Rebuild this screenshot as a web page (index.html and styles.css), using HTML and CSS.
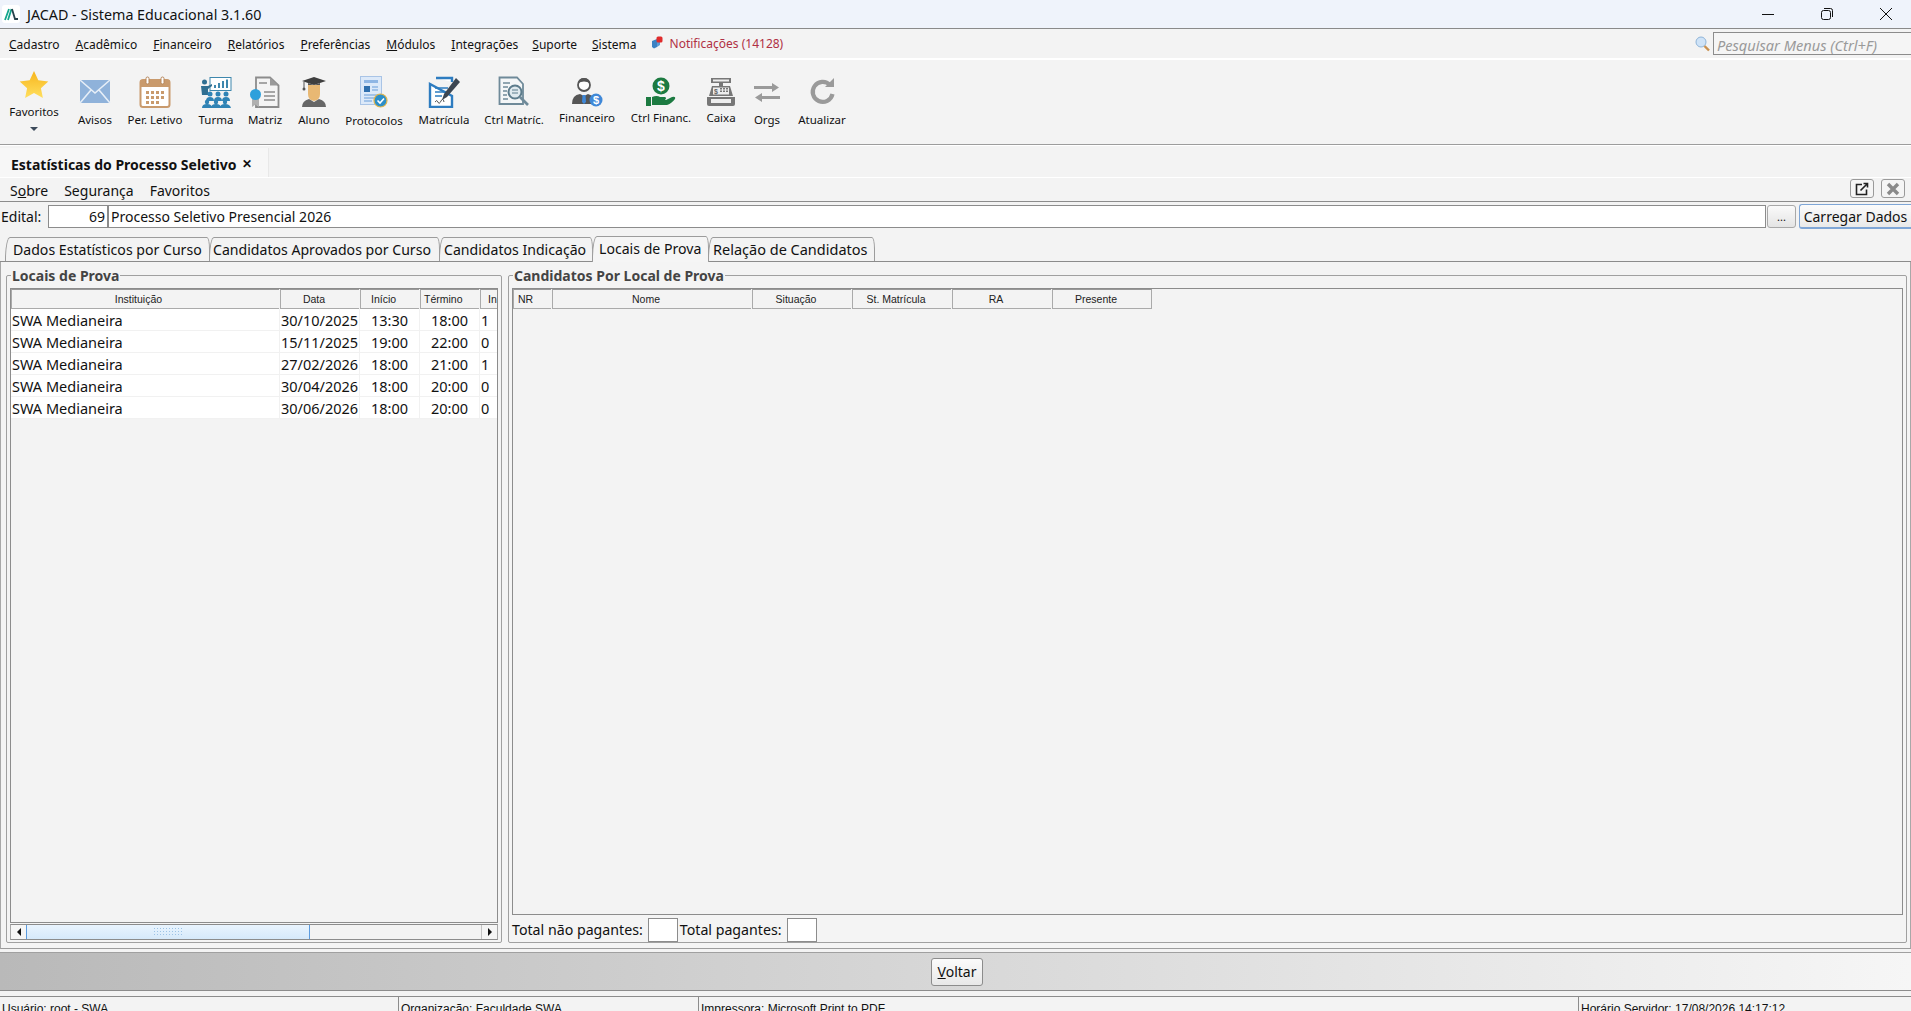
FILE: index.html
```html
<!DOCTYPE html>
<html lang="pt-BR">
<head>
  <meta charset="UTF-8" />
  <title>JACAD - Sistema Educacional 3.1.60</title>
  <link rel="stylesheet" href="styles.css">
</head>
<body>
  <!-- Barra de titulo -->
  <header class="title-bar">
    <svg class="app-logo" width="18" height="18" viewBox="0 0 18 18"><rect width="18" height="18" rx="3" fill="#fff"/><path d="M3 15L7 4M6 15L9.500 4" stroke="#14a58c" stroke-width="1.800" fill="none"/><path d="M10 4L13 14H16" stroke="#27424a" stroke-width="1.800" fill="none"/></svg>
    <span class="app-name">JACAD - Sistema Educacional 3.1.60</span>
    <div class="win-buttons">
      <svg width="12" height="12" viewBox="0 0 12 12"><path d="M0 6.500H12" stroke="#111" stroke-width="1"/></svg>
      <svg width="12" height="12" viewBox="0 0 12 12"><rect x="0.500" y="2.500" width="9" height="9" rx="2" fill="none" stroke="#111"/><path d="M3 .5H9.500A2 2 0 0 1 11.500 2.500V9" fill="none" stroke="#111"/></svg>
      <svg width="12" height="12" viewBox="0 0 12 12"><path d="M0 0L12 12M12 0L0 12" stroke="#111" stroke-width="1"/></svg>
    </div>
  </header>

  <!-- Menu principal -->
  <nav class="main-menu">
    <a><u>C</u>adastro</a>
    <a><u>A</u>cadêmico</a>
    <a><u>F</u>inanceiro</a>
    <a><u>R</u>elatórios</a>
    <a><u>P</u>referências</a>
    <a><u>M</u>ódulos</a>
    <a><u>I</u>ntegrações</a>
    <a><u>S</u>uporte</a>
    <a><u>S</u>istema</a>
    <span class="notify">
      <svg width="12" height="14" viewBox="0 0 12 14"><path d="M1 5L6 3V11L3 12.500L1 11Z" fill="#3b82c4"/><path d="M6 3L9 5V9L6 11Z" fill="#5b9bd5"/><rect x="5.500" y="0.500" width="6" height="6" rx="1.500" fill="#e02b2b"/></svg>
      Notificações (14128)
    </span>
    <div class="menu-search">
      <svg width="15" height="16" viewBox="0 0 15 16"><circle cx="6" cy="6" r="5" fill="#cfe3f7" stroke="#8fb4d8"/><path d="M9.500 10L14 14.500" stroke="#c9904f" stroke-width="2.400"/></svg>
      <input class="search-input" placeholder="Pesquisar Menus (Ctrl+F)">
    </div>
  </nav>

  <!-- Barra de atalhos -->
  <div class="toolbar">
    <div class="tool tool-fav">
      <svg width="30" height="30" viewBox="0 0 30 30"><defs><linearGradient id="star" x1="0" y1="0" x2="0" y2="1"><stop offset="0" stop-color="#f7b51c"/><stop offset="1" stop-color="#ffdf5e"/></linearGradient></defs><path d="M15 1L19.300 10.200L29.300 11.400L21.900 18.200L23.900 28L15 23.100L6.100 28L8.100 18.200L.7 11.400L10.700 10.200Z" fill="url(#star)"/></svg>
      <span>Favoritos</span>
      <i class="fav-arrow"></i>
    </div>
    <div class="tool">
      <svg width="32" height="32" viewBox="0 0 32 32"><rect x="1" y="4" width="30" height="23" fill="#8fb2da"/><path d="M1 4L16 17L31 4M1 27L12 14M31 27L20 14" fill="none" stroke="#e6eef7" stroke-width="1.600"/></svg>
      <span>Avisos</span>
    </div>
    <div class="tool">
      <svg width="32" height="32" viewBox="0 0 32 32"><rect x="1.500" y="4" width="29" height="27" rx="2.500" fill="#fff" stroke="#c99a6c" stroke-width="2"/><rect x="1.500" y="4" width="29" height="7" fill="#c99a6c"/><rect x="7" y="1" width="3" height="7" rx="1.500" fill="#fff" stroke="#b58558"/><rect x="22" y="1" width="3" height="7" rx="1.500" fill="#fff" stroke="#b58558"/><path d="M7 15h3v3H7zM12 15h3v3h-3zM17 15h3v3h-3zM22 15h3v3h-3zM7 20h3v3H7zM12 20h3v3h-3zM17 20h3v3h-3zM22 20h3v3h-3zM7 25h3v3H7zM12 25h3v3h-3zM17 25h3v3h-3z" fill="#c99a6c"/></svg>
      <span>Per. Letivo</span>
    </div>
    <div class="tool">
      <svg width="32" height="32" viewBox="0 0 32 32"><rect x="10" y="1.500" width="21" height="13" fill="#fff" stroke="#3e87ad"/><path d="M14 12V9h2v3zM18 12V7h2v5zM22 12V5h2v7zM26 12V3.500h2V12z" fill="#3e87ad"/><circle cx="4.500" cy="6" r="2.500" fill="#2f6f92"/><path d="M1 10h7l4-2v2l-4 3v6H2z" fill="#2f6f92"/><g fill="#2f83b5"><circle cx="10" cy="18" r="2.500"/><circle cx="18" cy="18" r="2.500"/><circle cx="26" cy="18" r="2.500"/><path d="M6 25q0-4 4-4t4 4zM14 25q0-4 4-4t4 4zM22 25q0-4 4-4t4 4z"/><circle cx="7" cy="26" r="2.200"/><circle cx="16" cy="26" r="2.200"/><circle cx="25" cy="26" r="2.200"/><path d="M2 32q0-4 5-4t5 4zM11 32q0-4 5-4t5 4zM20 32q0-4 5-4t6 4z"/></g></svg>
      <span>Turma</span>
    </div>
    <div class="tool">
      <svg width="32" height="32" viewBox="0 0 32 32"><path d="M7 1.500H21L29.500 9.500V31H7Z" fill="#f4f4f4" stroke="#8c8c8c" stroke-width="1.800"/><path d="M21 1.500V9.500H29.500Z" fill="#9a9a9a"/><path d="M10 7H18M15 16H26M15 20H26M15 24H26" stroke="#8c8c8c" stroke-width="1.600"/><path d="M3 22V31L6.500 28.500L10 31V22Z" fill="#b0b0b0"/><circle cx="6.500" cy="18.500" r="5.500" fill="#2da0dc"/></svg>
      <span>Matriz</span>
    </div>
    <div class="tool">
      <svg width="26" height="32" viewBox="0 0 26 32"><path d="M7 9H19V18Q19 24 13 25Q7 24 7 18Z" fill="#e8b873"/><path d="M1 31Q1 25 8 23L13 26L18 23Q25 25 25 31Z" fill="#666"/><path d="M1 5L13 1L25 5L13 9Z" fill="#3f3f3f"/><path d="M7 7V9H19V7L13 9Z" fill="#555"/><path d="M3 6V12" stroke="#555"/><circle cx="3" cy="13" r="1.500" fill="#555"/></svg>
      <span>Aluno</span>
    </div>
    <div class="tool tool-low">
      <svg width="28" height="32" viewBox="0 0 28 32"><rect x="0.500" y="0.500" width="21" height="28" fill="#dce9f9" stroke="#a9c4e6"/><rect x="4" y="4" width="14" height="3" fill="#8fb6e4"/><rect x="4" y="10" width="6" height="6" fill="#2f6fae"/><path d="M12 11H18M12 14H18M4 19H18M4 22H14M4 25H12" stroke="#8fb6e4" stroke-width="1.400"/><circle cx="20.500" cy="24.500" r="6.500" fill="#2c8fc9" stroke="#e0b44a" stroke-width="1.200"/><path d="M17.500 24.500L20 27L24 22.500" fill="none" stroke="#fff" stroke-width="1.600"/></svg>
      <span>Protocolos</span>
    </div>
    <div class="tool">
      <svg width="32" height="32" viewBox="0 0 32 32"><path d="M8 2H24V6M24 20V31H2V8Z" fill="#fff" stroke="#2d7cc0" stroke-width="2.400"/><path d="M7 12H20M7 16H18M7 20H14" stroke="#2d7cc0" stroke-width="1.600"/><path d="M7 26q2-3 3 0t3-1 3 1" fill="none" stroke="#555"/><path d="M28 2L32 6L19 21L14 24L16 18Z" fill="#3c4652"/></svg>
      <span>Matrícula</span>
    </div>
    <div class="tool">
      <svg width="32" height="32" viewBox="0 0 32 32"><path d="M1.500 1.500H19L25 8V28H1.500Z" fill="#f4f6f7" stroke="#6f8a99" stroke-width="1.800"/><path d="M5 7H12M5 11H10M5 15H9M5 19H9M5 23H10" stroke="#6f8a99" stroke-width="1.600"/><circle cx="17" cy="16" r="6.500" fill="#dfe9ee" stroke="#5d7c8c" stroke-width="2"/><path d="M14 14H20M14 17H20" stroke="#5d7c8c"/><path d="M22 21L30 29" stroke="#6f8a99" stroke-width="2.600"/></svg>
      <span>Ctrl Matríc.</span>
    </div>
    <div class="tool tool-mid">
      <svg width="32" height="30" viewBox="0 0 32 30"><circle cx="13" cy="8" r="6" fill="#fff" stroke="#555" stroke-width="1.800"/><path d="M7 6Q8 1 13 1T19 6Q13 3 7 6Z" fill="#555"/><path d="M1 27Q1 18 9 17L13 19L17 17Q21 18 23 21V27Z" fill="#555"/><path d="M11.500 18H14.500L15 25L13 27L11 25Z" fill="#3f88d8"/><circle cx="25" cy="23" r="6.500" fill="#3f88d8"/><text class="coin-text" x="25" y="27" font-size="11" fill="#fff" text-anchor="middle">$</text></svg>
      <span>Financeiro</span>
    </div>
    <div class="tool tool-mid">
      <svg width="32" height="30" viewBox="0 0 32 30"><circle cx="16" cy="9" r="8.500" fill="#1c7a41"/><text class="coin-text" x="16" y="14" font-size="14" fill="#fff" text-anchor="middle">$</text><path d="M1 20H6V29H1ZM7 20Q12 18 15 20H20Q22 21 20 23H14H21L27 20Q31 19 30 22Q26 27 22 28H7Z" fill="#1c7a41"/></svg>
      <span>Ctrl Financ.</span>
    </div>
    <div class="tool tool-mid">
      <svg width="30" height="30" viewBox="0 0 30 30"><path d="M5 1H25V6H17V9H24L27 19H3L6 9H13V6H5Z" fill="#777"/><rect x="7" y="2.500" width="16" height="2" fill="#eee"/><rect x="7" y="10.500" width="16" height="7" fill="#eee"/><path d="M14 11h2v1.500h-2zM17 11h2v1.500h-2zM20 11h2v1.500h-2zM14 13.500h2v1.500h-2zM17 13.500h2v1.500h-2zM20 13.500h2v1.500h-2z" fill="#777"/><text class="coin-text" x="10" y="17" font-size="7" fill="#666" text-anchor="middle">$</text><path d="M1 20H29V27Q29 29 27 29H3Q1 29 1 27Z" fill="#777"/><rect x="5" y="22" width="20" height="4" fill="#eee"/></svg>
      <span>Caixa</span>
    </div>
    <div class="tool">
      <svg width="26" height="32" viewBox="0 0 26 32"><path d="M0 10H18V7L25 11.500L18 16V13H0ZM26 20H8V17L1 21.500L8 26V23H26Z" fill="#9a9a9a"/></svg>
      <span>Orgs</span>
    </div>
    <div class="tool">
      <svg width="28" height="32" viewBox="0 0 28 32"><path d="M22 9A10 10 0 1 0 24.500 18" fill="none" stroke="#9a9a9a" stroke-width="4.200"/><path d="M17 11H26V2Z" fill="#9a9a9a"/></svg>
      <span>Atualizar</span>
    </div>
  </div>

  <!-- Aba do documento aberto -->
  <div class="doc-tabs">
    <div class="doc-tab">Estatísticas do Processo Seletivo <span class="doc-close">✕</span></div>
  </div>

  <div class="form-menu">
    <a>S<u>o</u>bre</a>
    <a>Segurança</a>
    <a>Favoritos</a>
    <div class="form-actions">
      <button class="mini-btn"><svg width="14" height="14" viewBox="0 0 14 14"><path d="M7 2.500H1.500V12.500H11.500V7.500" fill="none" stroke="#222" stroke-width="1.600"/><path d="M5.500 8.500L12 2M8.500 1.500H12.500V5.500" fill="none" stroke="#222" stroke-width="1.600"/></svg></button>
      <button class="mini-btn"><svg width="14" height="14" viewBox="0 0 14 14"><path d="M2 2L12 12M12 2L2 12" stroke="#8a8a8a" stroke-width="3.400"/></svg></button>
    </div>
  </div>

  <div class="edital-row">
    <label>Edital:</label>
    <input class="edital-code" value="69">
    <input class="edital-name" value="Processo Seletivo Presencial 2026">
    <button class="dots-btn">...</button>
    <button class="load-btn">Carregar Dados</button>
  </div>

  <div class="tabs">
    <div class="tab">Dados Estatísticos por Curso</div>
    <div class="tab">Candidatos Aprovados por Curso</div>
    <div class="tab">Candidatos Indicação</div>
    <div class="tab tab-active">Locais de Prova</div>
    <div class="tab">Relação de Candidatos</div>
  </div>

  <main class="tab-panel">
    <fieldset class="group group-left">
      <legend>Locais de Prova</legend>
      <div class="group-body">
        <div class="grid-frame">
          <table class="grid grid-locais">
            <colgroup><col class="c-inst"><col class="c-data"><col class="c-hora"><col class="c-hora"><col class="c-ins"></colgroup>
            <thead>
              <tr><th>Instituição</th><th>Data</th><th>Início</th><th>Término</th><th>In</th></tr>
            </thead>
            <tbody>
              <tr><td>SWA Medianeira</td><td class="mid">30/10/2025</td><td class="mid">13:30</td><td class="mid">18:00</td><td>1</td></tr>
              <tr><td>SWA Medianeira</td><td class="mid">15/11/2025</td><td class="mid">19:00</td><td class="mid">22:00</td><td>0</td></tr>
              <tr><td>SWA Medianeira</td><td class="mid">27/02/2026</td><td class="mid">18:00</td><td class="mid">21:00</td><td>1</td></tr>
              <tr><td>SWA Medianeira</td><td class="mid">30/04/2026</td><td class="mid">18:00</td><td class="mid">20:00</td><td>0</td></tr>
              <tr><td>SWA Medianeira</td><td class="mid">30/06/2026</td><td class="mid">18:00</td><td class="mid">20:00</td><td>0</td></tr>
            </tbody>
          </table>
        </div>
        <div class="hscroll">
          <span class="sb-btn"><i class="arrow-l"></i></span>
          <div class="sb-thumb"><i class="sb-grip"></i></div>
          <div class="sb-track"></div>
          <span class="sb-btn"><i class="arrow-r"></i></span>
        </div>
      </div>
    </fieldset>

    <fieldset class="group group-right">
      <legend>Candidatos Por Local de Prova</legend>
      <div class="group-body">
        <div class="grid-frame">
          <table class="grid grid-cand">
            <colgroup><col class="c-nr"><col class="c-nome"><col class="c-std"><col class="c-std"><col class="c-std"><col class="c-std"></colgroup>
            <thead>
              <tr><th>NR</th><th>Nome</th><th>Situação</th><th>St. Matrícula</th><th>RA</th><th>Presente</th></tr>
            </thead>
          </table>
        </div>
        <div class="totals">
          <label>Total não pagantes:</label><input class="total-box">
          <label>Total pagantes:</label><input class="total-box">
        </div>
      </div>
    </fieldset>
  </main>

  <div class="action-bar">
    <button class="back-btn"><u>V</u>oltar</button>
  </div>

  <footer class="status-bar">
    <div class="st-user">Usuário: root - SWA</div>
    <div class="st-org">Organização: Faculdade SWA</div>
    <div class="st-print">Impressora: Microsoft Print to PDF</div>
    <div class="st-time">Horário Servidor: 17/08/2026 14:17:12</div>
  </footer>
</body>
</html>
```
FILE: styles.css
```css
/* Reset */
* {
  margin: 0;
  padding: 0;
  box-sizing: border-box;
}
html, body {
  height: 100%;
  overflow: hidden;
}
body {
  display: flex;
  flex-direction: column;
  height: 1011px;
  font-family: "Noto Sans", sans-serif;
  font-size: 14px;
  color: #111;
  background: #f3f3f3;
}
input, button {
  font-family: inherit;
  font-size: 14px;
  color: #111;
}

/* Barra de titulo */
.title-bar {
  flex: 0 0 29px;
  display: flex;
  align-items: center;
  background: #eff3fb;
  border-bottom: 1px solid #8a8a8a;
  padding-left: 2px;
}
.app-logo {
  margin-right: 7px;
}
.app-name {
  font-size: 14.3px;
}
.win-buttons {
  margin-left: auto;
  display: flex;
  gap: 47px;
  padding-right: 19px;
}

/* Menu */
.main-menu {
  flex: 0 0 31px;
  display: flex;
  align-items: center;
  font-size: 12px;
  padding-left: 9px;
  border-bottom: 2px solid #fff;
}
.main-menu a {
  margin-right: 16px;
  padding-top: 2px;
}
.main-menu a:nth-child(7) { margin-right: 14px; }
.main-menu a:nth-child(8) { margin-right: 15px; }
.notify {
  display: flex;
  align-items: center;
  gap: 7px;
  color: #b03044;
  margin-left: -2px;
  margin-top: -1px;
}
.menu-search {
  margin-left: auto;
  display: flex;
  align-items: center;
  gap: 3px;
}
.search-input {
  width: 198px;
  height: 23px;
  border: 1px solid #8c8c8c;
  border-right: none;
  background: #f5f5f5;
  padding: 3px 0 0 3px;
  font-style: italic;
  font-size: 14.6px;
}
.search-input::placeholder {
  color: #9a9a9a;
  opacity: 1;
}

/* Barra de atalhos */
.toolbar {
  flex: 0 0 85px;
  display: grid;
  grid-template-columns: 68px 54px 66px 56px 42px 56px 64px 76px 64px 82px 66px 54px 38px 72px;
  border-bottom: 1px solid #9c9c9c;
  box-shadow: 0 1px 0 #fff;
}
.tool {
  display: flex;
  flex-direction: column;
  align-items: center;
  font-size: 11.5px;
  white-space: nowrap;
  padding-top: 16px;
}
.tool svg {
  flex: none;
  display: block;
}
.tool span {
  margin-top: 4px;
  line-height: 16px;
}
.tool-low span {
  margin-top: 5px;
}
.tool-mid {
  padding-top: 17px;
}
.tool-mid span {
  margin-top: 3px;
}
.tool-fav {
  padding-top: 9px;
}
.tool-fav svg {
  margin-top: 1px;
}
.tool-fav span {
  margin-top: 4px;
}
.fav-arrow {
  margin-top: 7px;
  border-left: 4px solid transparent;
  border-right: 4px solid transparent;
  border-top: 4px solid #3c4a5a;
}

/* Aba do documento */
.doc-tabs {
  flex: 0 0 33px;
  display: flex;
  border-bottom: 1px solid #fff;
  padding-top: 3px;
}
.doc-tab {
  width: 269px;
  background: #f7f7f7;
  border-right: 1px solid #e8e8e8;
  font-weight: 700;
  font-size: 14px;
  padding: 7px 0 0 11px;
  white-space: nowrap;
}
.doc-close {
  font-size: 12px;
  font-weight: 700;
  margin-left: 2px;
  vertical-align: 2px;
}

/* Menu do formulario */
.form-menu {
  flex: 0 0 24px;
  display: flex;
  align-items: center;
  padding-left: 10px;
  gap: 16px;
  border-bottom: 1px solid #8c8c8c;
}
.form-menu a {
  padding-top: 2px;
}
.form-actions {
  margin-left: auto;
  display: flex;
  gap: 7px;
  padding-right: 6px;
  margin-top: -2px;
}
.mini-btn {
  width: 24px;
  height: 19px;
  display: flex;
  align-items: center;
  justify-content: center;
  border: 1px solid #9a9a9a;
  border-radius: 3px;
  background: #f5f5f5;
}

/* Linha do edital */
.edital-row {
  flex: 0 0 26px;
  display: flex;
  align-items: center;
  padding: 2px 0 0 1px;
}
.edital-row label {
  width: 47px;
}
.edital-row input {
  height: 23px;
  border: 1px solid #8c8c8c;
  background: #fff;
  padding: 0 2px;
}
.edital-code {
  width: 60px;
  text-align: right;
}
.edital-name {
  width: 1658px;
  border-left: none;
}
.dots-btn {
  width: 29px;
  height: 23px;
  margin-left: 1px;
  border: 1px solid #a8a8a8;
  border-radius: 3px;
  background: linear-gradient(#fafafa, #e4e4e4);
  font-size: 11px;
}
.load-btn {
  flex: 1;
  height: 25px;
  margin-left: 3px;
  border: 1px solid #7fa6d6;
  border-right: none;
  border-bottom: 2px solid #7fa6d6;
  border-radius: 3px 0 0 3px;
  background: linear-gradient(#fbfbfb, #e9e9e9);
  white-space: nowrap;
}

/* Abas */
.tabs {
  flex: 0 0 33px;
  display: flex;
  align-items: flex-end;
  padding-left: 5px;
  border-bottom: 1px solid #8c8c8c;
  font-size: 14.1px;
}
.tab {
  height: 24px;
  padding-top: 2px;
  border: 1px solid #9c9c9c;
  border-bottom: none;
  border-radius: 5px 3px 0 0 / 22px 12px 0 0;
  margin-right: -1px;
  white-space: nowrap;
  flex: none;
}
.tab:nth-child(1) { width: 205px; padding-left: 7px; }
.tab:nth-child(2) { width: 231px; padding-left: 3px; }
.tab:nth-child(3) { width: 154px; padding-left: 4px; }
.tab:nth-child(4) { width: 117px; padding-left: 6px; }
.tab:nth-child(5) { width: 167px; padding: 1px 0 0 4px; font-size: 14.5px; }
.tab-active {
  height: 26px;
  margin-bottom: -1px;
  background: #f5f5f5;
  position: relative;
}

/* Painel principal */
.tab-panel {
  flex: 1;
  min-height: 0;
  display: flex;
  gap: 6px;
  padding: 5px 3px 5px 5px;
  border-left: 1px solid #a8a8a8;
  border-right: 1px solid #a8a8a8;
  border-bottom: 1px solid #9c9c9c;
  background: #f4f4f4;
}
.group {
  display: flex;
  min-width: 0;
  border: 1px solid #a0a0a0;
  border-radius: 2px;
  padding: 0 3px 2px 3px;
}
.group legend {
  margin-left: 1px;
  padding: 0 1px;
  font-size: 14px;
  font-weight: 700;
  line-height: 17px;
  color: #444;
}
.group-left {
  flex: 0 0 496px;
}
.group-right {
  flex: 1;
}
.group-body {
  flex: 1;
  min-width: 0;
  height: 100%;
  display: flex;
  flex-direction: column;
  padding-top: 4px;
}
.grid-frame {
  flex: 1;
  min-height: 0;
  overflow: hidden;
  border: 1px solid #8c8c8c;
  background: #f3f3f3;
}

/* Tabelas */
.grid {
  table-layout: fixed;
  border-collapse: separate;
  border-spacing: 0;
}
.grid th {
  height: 20px;
  font-family: "Liberation Sans", sans-serif;
  font-size: 10.5px;
  font-weight: 400;
  color: #222;
  background: #f3f3f3;
  border: 1px solid #aaa;
  border-top-color: #999;
  box-shadow: 0 0 0 1px #f3f3f3;
  overflow: hidden;
  white-space: nowrap;
}
.grid-locais th:nth-child(1) { padding-right: 14px; }
.grid-locais th:nth-child(2) { padding-right: 12px; }
.grid-locais th:nth-child(3) { text-align: left; padding-left: 10px; }
.grid-locais th:nth-child(4) { text-align: left; padding-left: 3px; }
.grid-locais th:nth-child(5) { text-align: left; padding-left: 7px; }
.grid-cand th { padding-right: 12px; }
.grid-cand th:nth-child(1) { text-align: left; padding: 0 0 0 4px; }
.grid td {
  height: 22px;
  background: #fff;
  border-right: 1px solid #f1f1f1;
  border-bottom: 1px solid #f1f1f1;
  padding: 0 1px;
  font-size: 14.5px;
  white-space: nowrap;
  overflow: hidden;
}
.grid td.mid {
  text-align: center;
}
.grid-locais { width: 488px; }
.c-inst { width: 269px; }
.c-data { width: 80px; }
.c-hora { width: 60px; }
.c-ins { width: 19px; }
.grid-cand { width: 639px; }
.c-nr { width: 39px; }
.c-nome { width: 200px; }
.c-std { width: 100px; }

/* Barra de rolagem */
.hscroll {
  flex: 0 0 16px;
  margin-top: 1px;
  display: flex;
  border-top: 1px solid #8c8c8c;
  border-bottom: 1px solid #8c8c8c;
  border-left: 1px solid #a8a8a8;
  border-right: 1px solid #a8a8a8;
}
.sb-btn {
  flex: 0 0 15px;
  display: flex;
  align-items: center;
  justify-content: center;
  background: #f5f5f5;
}
.arrow-l {
  border-top: 4px solid transparent;
  border-bottom: 4px solid transparent;
  border-right: 4px solid #111;
}
.arrow-r {
  border-top: 4px solid transparent;
  border-bottom: 4px solid transparent;
  border-left: 4px solid #111;
}
.sb-thumb {
  flex: 0 0 284px;
  display: flex;
  align-items: center;
  justify-content: center;
  background: linear-gradient(#e9f4fe, #d6e9fa);
  border-left: 1px solid #5b9bdf;
  border-right: 1px solid #5b9bdf;
}
.sb-grip {
  width: 30px;
  height: 10px;
  background-image: radial-gradient(#9dc3e6 1px, transparent 1px);
  background-size: 3px 3px;
}
.sb-track {
  flex: 1;
  background: #f3f3f3;
  border-right: 1px solid #c4c4c4;
}

/* Totais */
.totals {
  flex: 0 0 27px;
  display: flex;
  align-items: center;
  padding-top: 2px;
  margin-bottom: -2px;
  font-size: 14.2px;
}
.totals label {
  margin-right: 5px;
}
.total-box {
  width: 30px;
  height: 24px;
  border: 1px solid #8c8c8c;
  background: #fff;
  margin-right: 2px;
}

/* Barra de acoes */
.action-bar {
  flex: 0 0 39px;
  display: flex;
  justify-content: center;
  align-items: center;
  margin-top: 3px;
  padding-left: 3px;
  background: linear-gradient(to right, #b9b9b9, #f6f6f6);
  border-top: 1px solid #a0a0a0;
  border-bottom: 1px solid #8c8c8c;
}
.back-btn {
  width: 52px;
  height: 28px;
  border: 1px solid #8c8c8c;
  border-radius: 3px;
  background: linear-gradient(#fbfbfb, #e8e8e8);
}

/* Rodape */
.status-bar {
  flex: 0 0 15px;
  margin-top: 5px;
  display: flex;
  overflow: hidden;
  border-top: 1px solid #8c8c8c;
  font-family: "Liberation Sans", sans-serif;
  font-size: 12px;
  line-height: 15px;
}
.status-bar div {
  height: 30px;
  padding: 5px 0 0 2px;
  border-right: 1px solid #8c8c8c;
  white-space: nowrap;
}
.st-user { width: 399px; }
.st-org { width: 300px; }
.st-print { width: 880px; }
.status-bar .st-time { flex: 1; border-right: none; }
.coin-text {
  font-family: "Liberation Sans", sans-serif;
  font-weight: 700;
}
```
